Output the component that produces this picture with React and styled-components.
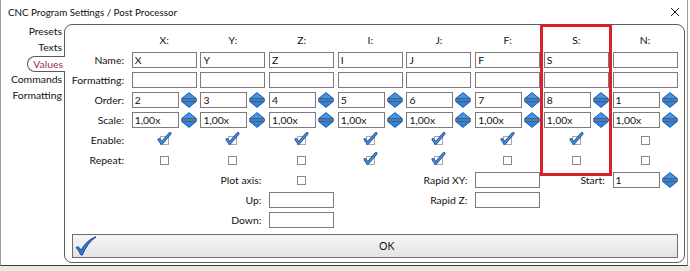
import React from 'react';
import styled, { createGlobalStyle } from 'styled-components';

const GlobalStyle = createGlobalStyle`
html, body {
  margin: 0;
  padding: 0;
  background: #ffffff;
}
body {
  font-family: Lato, "Open Sans", sans-serif;
  color: #000;
}
`;

const Window = styled.div`
position: relative;
width: 688px;
height: 266px;
background: #ffffff;
border-left: 1px solid #9c9c9c;
border-right: 1px solid #9c9c9c;
border-bottom: 1px solid #3a3a3a;
box-sizing: border-box;
display: flex;
flex-direction: column;
`;

const TitleBar = styled.div`
height: 24px;
display: flex;
align-items: center;
justify-content: space-between;
padding: 0 7px 0 7px;
flex-shrink: 0;
`;

const Title = styled.span`
font-size: 9.8px;
color: #111;
`;

const Close = styled.svg`
width: 10px;
height: 10px;
`;

const Body = styled.div`
flex: 1;
display: flex;
padding-bottom: 2px;
`;

const TabList = styled.div`
width: 63px;
display: flex;
flex-direction: column;
align-items: flex-end;
flex-shrink: 0;
`;

const Tab = styled.div`
height: 16px;
line-height: 15px;
font-size: 10.4px;
box-sizing: border-box;
padding: 0 2px 0 ${p => (p.$active ? '5px' : '0')};
color: ${p => (p.$active ? '#a2294f' : '#111')};
background: #fff;
position: relative;
z-index: ${p => (p.$active ? 1 : 0)};
margin-right: ${p => (p.$active ? '-1px' : '0')};
border: ${p => (p.$active ? '1px solid #5a5a5a' : 'none')};
border-right: none;
border-radius: 8px 0 0 8px;
`;

const Panel = styled.div`
flex: 1;
margin-right: 3px;
border: 1px solid #5e5e5e;
border-radius: 8px;
padding: 7px 6px 0 5px;
display: flex;
flex-direction: column;
`;

const Form = styled.div`
display: grid;
grid-template-columns: 58px repeat(8, 65px);
grid-template-rows: repeat(10, 16px);
column-gap: 3.7px;
row-gap: 4px;
font-size: 10.4px;
color: #111;
`;

const Label = styled.div`
grid-column: ${p => p.$col || 1};
display: flex;
align-items: center;
justify-content: flex-end;
padding-right: 4px;
white-space: nowrap;
`;

const ColHead = styled.div`
display: flex;
align-items: center;
justify-content: center;
`;

const TextBox = styled.div`
grid-column: ${p => p.$col || 'auto'};
box-sizing: border-box;
height: 16px;
border: 1px solid #7c7c7c;
background: #fff;
padding-left: 2px;
line-height: 14px;
`;

const SpinField = styled.div`
grid-column: ${p => p.$col || 'auto'};
display: flex;
gap: 2px;
align-items: center;
`;

const SpinInput = styled(TextBox)`
flex: 1;
min-width: 0;
`;

const SpinIcon = styled.svg`
flex-shrink: 0;
width: 16px;
height: 16px;
`;

const CheckCell = styled.div`
grid-column: ${p => p.$col || 'auto'};
display: flex;
align-items: center;
justify-content: center;
`;

const Box = styled.span`
position: relative;
width: 9px;
height: 9px;
box-sizing: border-box;
border: 1px solid ${p => (p.$checked ? '#a8a8a8' : '#8a8a8a')};
background: #fff;
`;

const Tick = styled.svg`
position: absolute;
left: -3px;
top: -5px;
width: 13px;
height: 13px;
overflow: visible;
`;

const OkButton = styled.div`
margin: 6px 0 0 2px;
height: 24px;
box-sizing: border-box;
border: 1px solid #6e6e6e;
background: linear-gradient(#f6f6f6, #e4e4e4);
display: flex;
align-items: center;
padding-left: 2px;
font-size: 10.5px;
color: #111;
`;

const OkText = styled.span`
flex: 1;
text-align: center;
`;

const Highlight = styled.div`
position: absolute;
left: 539px;
top: 24px;
width: 72px;
height: 152px;
box-sizing: border-box;
border: 3px solid #d8222b;
pointer-events: none;
`;

const Below = styled.div`
height: 5px;
background: #e9e8e1;
`;

const cols = ['X', 'Y', 'Z', 'I', 'J', 'F', 'S', 'N'];
const order = ['2', '3', '4', '5', '6', '7', '8', '1'];
const enable = [1, 1, 1, 1, 1, 1, 1, 0];
const repeat = [0, 0, 0, 1, 1, 0, 0, 0];
const tabs = ['Presets', 'Texts', 'Values', 'Commands', 'Formatting'];

const Spinner = () => (
  <SpinIcon viewBox="0 0 16 16">
    <polygon points="8,0.6 15.4,6.6 0.6,6.6" fill="#3f96ec" stroke="#1d5aa6" strokeWidth="1" strokeLinejoin="round" />
    <line x1="0" y1="8" x2="16" y2="8" stroke="#1e3455" strokeWidth="1.3" />
    <polygon points="0.6,9.4 15.4,9.4 8,15.4" fill="#2d84e0" stroke="#1d5aa6" strokeWidth="1" strokeLinejoin="round" />
  </SpinIcon>
);

const CheckBox = ({ checked }) => (
  <Box $checked={checked}>
    {checked && (
      <Tick viewBox="0 0 13 13">
        <path d="M1,7.5 L3.6,11.2 L12,1.5" fill="none" stroke="#1f4f95" strokeWidth="3" strokeLinecap="round" strokeLinejoin="round" />
        <path d="M1,7.5 L3.6,11.2 L12,1.5" fill="none" stroke="#4a8ee0" strokeWidth="1.4" strokeLinecap="round" strokeLinejoin="round" />
      </Tick>
    )}
  </Box>
);

const BigCheck = () => (
  <svg width="22" height="20" viewBox="0 0 22 20">
    <path
      d="M1,11.5 C2.6,10.2 4.4,11 6.2,14.2 C9.5,8.2 14,3.2 21,0.8 C15.2,5 10.4,11.2 7.4,19 C6.4,19.4 5.8,19 5.4,18.4 C4.2,15.6 2.8,13.2 1,11.5 Z"
      fill="#2f74d4"
      stroke="#1a3d7c"
      strokeWidth="0.9"
      strokeLinejoin="round"
    />
  </svg>
);

const App = () => {
  return (
    <>
      <GlobalStyle />
      <Window>
        <TitleBar>
          <Title>CNC Program Settings / Post Processor</Title>
          <Close viewBox="0 0 10 10">
            <path d="M1,1 L9,9 M9,1 L1,9" stroke="#222" strokeWidth="1" />
          </Close>
        </TitleBar>
        <Body>
          <TabList>
            {tabs.map(t => (
              <Tab key={t} $active={t === 'Values'}>{t}</Tab>
            ))}
          </TabList>
          <Panel>
            <Form>
              <div />
              {cols.map(c => (
                <ColHead key={c}>{c}:</ColHead>
              ))}

              <Label>Name:</Label>
              {cols.map(c => (
                <TextBox key={c}>{c === 'N' ? '' : c}</TextBox>
              ))}

              <Label>Formatting:</Label>
              {cols.map(c => (
                <TextBox key={c} />
              ))}

              <Label>Order:</Label>
              {order.map((o, i) => (
                <SpinField key={i}>
                  <SpinInput>{o}</SpinInput>
                  <Spinner />
                </SpinField>
              ))}

              <Label>Scale:</Label>
              {cols.map(c => (
                <SpinField key={c}>
                  <SpinInput>1,00x</SpinInput>
                  <Spinner />
                </SpinField>
              ))}

              <Label>Enable:</Label>
              {enable.map((e, i) => (
                <CheckCell key={i}>
                  <CheckBox checked={!!e} />
                </CheckCell>
              ))}

              <Label>Repeat:</Label>
              {repeat.map((r, i) => (
                <CheckCell key={i}>
                  <CheckBox checked={!!r} />
                </CheckCell>
              ))}

              <Label $col={3}>Plot axis:</Label>
              <CheckCell $col={4}>
                <CheckBox />
              </CheckCell>
              <Label $col={6}>Rapid XY:</Label>
              <TextBox $col={7} />
              <Label $col={8}>Start:</Label>
              <SpinField $col={9}>
                <SpinInput>1</SpinInput>
                <Spinner />
              </SpinField>

              <Label $col={3}>Up:</Label>
              <TextBox $col={4} />
              <Label $col={6}>Rapid Z:</Label>
              <TextBox $col={7} />

              <Label $col={3}>Down:</Label>
              <TextBox $col={4} />
            </Form>
            <OkButton>
              <BigCheck />
              <OkText>OK</OkText>
            </OkButton>
          </Panel>
        </Body>
        <Highlight />
      </Window>
      <Below />
    </>
  );
};

export default App;
